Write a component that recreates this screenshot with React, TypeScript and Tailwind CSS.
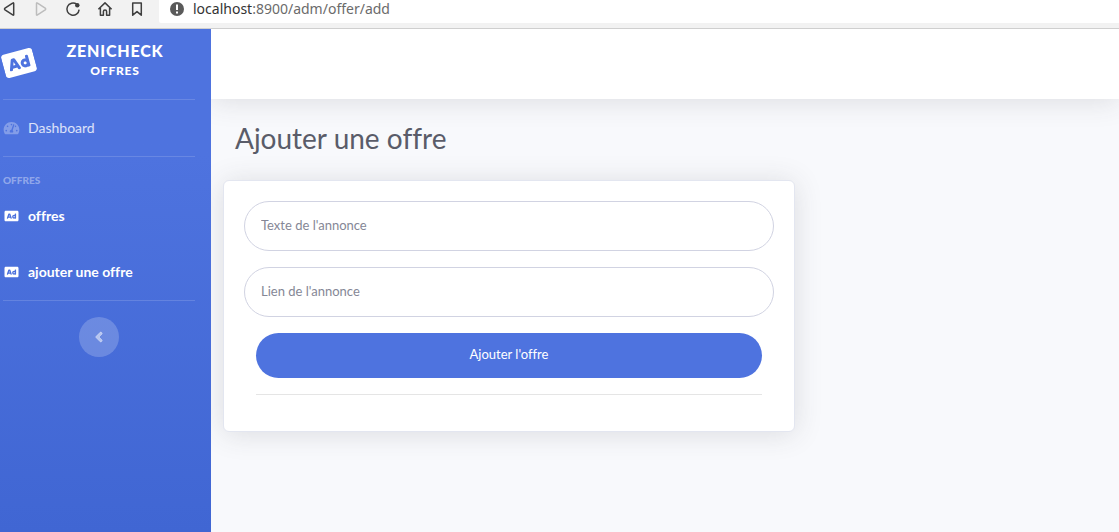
import { ReactNode } from 'react';
import { FaAd, FaAngleLeft, FaTachometerAlt } from 'react-icons/fa';

const browserButtons: { label: string; disabled?: boolean; icon: ReactNode }[] = [
  {
    label: 'Précédent',
    icon: <path d="M13.7 3.6v10.8q0 1.2-1 .5L5 9.8q-1-.8 0-1.6l7.700-5.100q1-.7 1 .5z" />
  },
  {
    label: 'Suivant',
    disabled: true,
    icon: <path d="M4.500 3.600v10.800q0 1.200 1 .5l7.700-5.100q1-.8 0-1.600L5.500 3.100q-1-.7-1 .5z" />
  },
  {
    label: 'Recharger',
    icon: (
      <>
        <path d="M12.600 4.200A6.100 6.100 0 1 0 15.100 9.600" />
        <circle cx="13.300" cy="5.300" r="2.200" fill="currentColor" stroke="none" />
      </>
    )
  },
  {
    label: 'Accueil',
    icon: <path d="M2.4 9.2 9 2.9l6.6 6.3M4.4 8v7.2h3v-3.6a1.6 1.6 0 0 1 3.2 0v3.6h3V8" />
  },
  {
    label: 'Favoris',
    icon: <path d="M4.7 3h8.6v12.2L9 11.6l-4.3 3.6z" />
  }
];

const offerLinks = ['offres', 'ajouter une offre'];

const fields = [
  { id: 'texte', placeholder: "Texte de l'annonce" },
  { id: 'lien', placeholder: "Lien de l'annonce" }
];

function BrowserBar() {
  return (
    <div className="flex h-[29px] shrink-0 items-start border-b border-[#cfcfcf] bg-[#f2f2f2]">
      <div className="flex w-[159px] shrink-0 gap-[14px]">
        {browserButtons.map((button) => (
          <button
            key={button.label}
            type="button"
            aria-label={button.label}
            disabled={button.disabled}
            className="h-[18px] w-[18px] text-[#3f3f3f] disabled:text-[#bdbdbd]"
          >
            <svg
              viewBox="0 0 18 18"
              className="h-[18px] w-[18px]"
              fill="none"
              stroke="currentColor"
              strokeWidth="1.5"
              strokeLinejoin="round"
            >
              {button.icon}
            </svg>
          </button>
        ))}
      </div>
      <div className="flex h-[23px] flex-1 items-start gap-2 rounded-bl-xs bg-white pl-[10px] font-['Noto_Sans',sans-serif] text-sm leading-[18px] text-[#6b6b6b]">
        <svg viewBox="0 0 16 18" className="h-[18px] w-4 shrink-0">
          <circle cx="8" cy="9" r="7" fill="#5a5a5a" />
          <path d="M7 4.5h2v5.5H7zM7 11.5h2v2H7z" fill="#fff" />
        </svg>
        <span>
          <span className="text-[#333]">localhost</span>:8900/adm/offer/add
        </span>
      </div>
    </div>
  );
}

function Divider() {
  return <hr className="border-white/15" />;
}

function Sidebar() {
  return (
    <nav className="w-[211px] shrink-0 bg-linear-to-b from-[#4e73df] from-25% to-[#4066d3] pr-4 pl-[3px] text-white">
      <a href="#" className="flex h-[70px] items-center pb-0.5">
        <FaAd className="size-8 shrink-0 -rotate-15" />
        <span className="flex-1 pb-1 text-center text-base leading-5 font-black tracking-wider uppercase">
          Zenicheck
          <span className="block text-xs leading-5">Offres</span>
        </span>
      </a>
      <Divider />
      <a href="#" className="flex h-14 items-center gap-2 text-sm text-white/80">
        <FaTachometerAlt className="w-[17px] text-white/30" />
        Dashboard
      </a>
      <Divider />
      <h2 className="pt-4 text-[10px] leading-[15px] font-black text-white/40 uppercase">Offres</h2>
      {offerLinks.map((link) => (
        <a key={link} href="#" className="flex h-14 items-center gap-2 text-sm font-bold">
          <FaAd className="w-[17px]" />
          {link}
        </a>
      ))}
      <Divider />
      <button
        type="button"
        aria-label="Réduire le menu"
        className="mx-auto mt-4 flex size-10 items-center justify-center rounded-full bg-white/20 text-white/50"
      >
        <FaAngleLeft stroke="currentColor" strokeWidth="24" />
      </button>
    </nav>
  );
}

function OfferForm() {
  return (
    <form className="w-full max-w-[572px] rounded-md border border-[#e3e6f0] bg-white px-5 pt-5 pb-9 shadow-[0_2px_28px_rgba(58,59,69,0.15)]">
      <div className="flex flex-col gap-4">
        {fields.map((field) => (
          <input
            key={field.id}
            id={field.id}
            type="text"
            aria-label={field.placeholder}
            placeholder={field.placeholder}
            className="h-[50px] w-full rounded-full border border-[#d1d3e2] px-4 pb-0.5 text-[13px] outline-none placeholder:text-[#858796]"
          />
        ))}
        <button
          type="submit"
          className="mx-3 h-[45px] rounded-full bg-[#4e73df] pb-0.5 text-[13px] text-white"
        >
          Ajouter l'offre
        </button>
        <hr className="mx-3 border-black/10" />
      </div>
    </form>
  );
}

export default function App() {
  return (
    <div className="flex min-h-screen flex-col font-[Lato,sans-serif] [font-variant-ligatures:none]">
      <BrowserBar />
      <div className="flex flex-1">
        <Sidebar />
        <div className="flex-1 overflow-hidden bg-[#f8f9fc]">
          <header className="h-[70px] bg-white shadow-[0_2px_28px_rgba(58,59,69,0.15)]" />
          <main className="px-3 pt-6">
            <h1 className="mb-[26px] px-3 text-[28px] leading-[31px] text-[#5a5c69]">Ajouter une offre</h1>
            <OfferForm />
          </main>
        </div>
      </div>
    </div>
  );
}
